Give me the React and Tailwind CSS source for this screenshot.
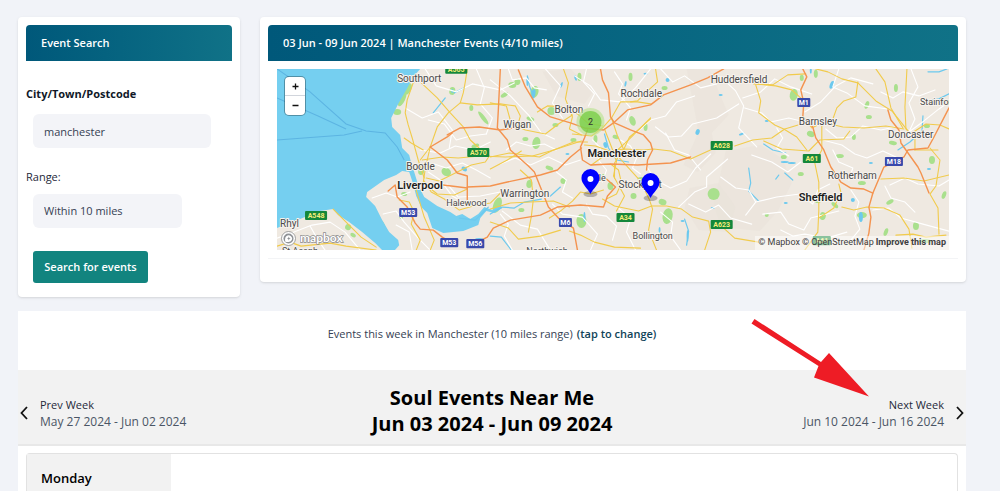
import { useState } from 'react';

const waters = [
  'M270 60 H424 L420 69 L413 77 L406 90 L398 104 L391 118 L392 127 L400 135 L402 148 L409 155 L411 163 L414 172 L418 185 L424 197 L437 206 L450 212 L456 216 L462 214 L470 219 L478 214 L484 207 L492 210 L500 205 L502 208 L494 213 L486 211 L480 218 L478 225 L463 231 L443 233 L432 228 L427 213 L421 207 L416 196 L413 184 L409 172 L402 171 L396 175 L384 180 L367 192 L366 197 L375 206 L382 220 L389 232 L398 240 L399 245 L393 252 H384 L375 243 L362 232 L349 222 L338 215 L333 209 L320 211 L300 219 L277 228 H270 Z',
];

const ferries = [
  'M277 69 L310 92 L346 124 L366 131 L385 133 L397 147 L404 160',
  'M277 98 L318 116 L346 129',
  'M277 140 L344 135 L362 131',
];

const minorRoads = [
  'M425 69 L436 86 L456 92 L472 84 L500 90 L514 83',
  'M405 108 L422 118 L438 112 L452 130 L449 148',
  'M420 150 L440 153 L455 146 L474 150 L490 142',
  'M372 198 L386 193 L397 197 L410 192',
  'M383 214 L396 211 L404 222 L418 238 L430 250',
  'M396 225 L409 232 L412 250',
  'M277 238 L294 232 L312 225 L330 222 L345 232 L360 250',
  'M310 226 L318 240 L325 250',
  'M428 172 L440 180 L452 196 L470 206',
  'M432 190 L447 184 L458 197 L480 196 L500 192',
  'M490 80 L510 96 L528 115 L541 133 L554 139',
  'M545 69 L560 86 L552 103 L562 118',
  'M574 76 L590 86 L600 100 L620 102 L635 88 L650 69',
  'M634 134 L650 120 L665 116 L676 102 L694 96',
  'M655 127 L668 137 L681 136 L692 124 L716 118 L738 104',
  'M665 133 L674 150 L688 155 L700 170',
  'M645 165 L655 180 L670 188 L686 181 L695 168 L710 154',
  'M678 207 L694 192 L706 187 L706 177 L727 159',
  'M688 204 L705 212 L718 205 L730 218 L751 224',
  'M618 208 L630 218 L626 232 L635 250',
  'M552 204 L562 214 L582 217 L597 234 L590 250',
  'M500 164 L515 158 L530 165 L548 157 L565 165 L580 160',
  'M502 211 L520 225 L537 229 L550 250',
  'M720 77 L735 91 L743 106 L738 128 L756 147',
  'M744 108 L761 113 L770 122 L788 118 L804 122',
  'M742 98 L760 92 L774 79 L790 87 L811 94',
  'M804 112 L820 102 L835 86 L850 78 L872 84',
  'M825 129 L836 138 L850 137 L862 126 L880 130 L894 127',
  'M720 177 L735 188 L748 190 L755 202 L745 215',
  'M755 202 L776 197 L799 194 L812 204 L817 190 L829 184',
  'M762 214 L780 212 L788 224 L803 230 L810 218 L838 211',
  'M800 162 L787 172 L771 162 L751 155',
  'M822 140 L841 145 L854 154 L866 158 L882 151 L895 157',
  'M850 190 L858 202 L854 216 L859 229 L850 240',
  'M872 210 L888 208 L900 218 L922 224 L948 231',
  'M889 185 L904 178 L917 184 L938 186 L948 180',
  'M910 69 L917 87 L908 103 L914 119 L908 132',
  'M908 132 L923 121 L938 109 L948 102',
  'M838 69 L832 87 L846 93 L864 106 L887 109',
  'M476 69 L484 88 L480 104 L492 118 L486 134',
  'M428 120 L444 124 L456 140 L470 136 L486 134',
  'M434 164 L446 168 L462 163 L476 170 L490 178',
  'M508 69 L512 80 L526 78 L534 88 L546 90',
  'M506 150 L516 142 L530 146 L544 144 L556 150',
  'M586 69 L583 82 L594 94 L588 106',
  'M614 72 L622 84 L618 94 L630 108 L626 120',
  'M660 69 L672 82 L684 76 L700 88 L716 84',
  'M592 140 L600 148 L598 160 L606 170 L602 182',
  'M620 140 L630 146 L636 158 L632 168 L640 174',
  'M556 172 L566 180 L562 192 L572 198',
  'M500 214 L508 224 L504 236 L512 250',
  'M586 204 L592 214 L606 216 L616 226 L612 240',
  'M660 212 L672 222 L670 236 L680 250',
  'M776 128 L782 138 L776 148 L788 156',
  'M832 150 L838 162 L852 168 L848 180',
  'M880 92 L892 98 L902 92 L918 96 L934 90',
  'M884 186 L890 198 L904 202 L914 212',
  'M780 230 L792 236 L804 234 L826 238 L846 232',
];

const yellowRoads = [
  'M423 76 L413 83 L407 100 L405 113 L408 125 L412 138 L418 160 L424 178',
  'M420 82 L437 98 L450 113 L463 127 L470 140 L482 151',
  'M467 69 L465 82 L463 93 L460 103 L448 113 L437 127 L430 147 L420 160',
  'M460 103 L477 105 L500 104 L515 106 L520 116 L517 127',
  'M422 160 L442 157 L458 158 L480 156 L505 157 L532 156 L550 151 L581 141',
  'M423 150 L411 143 L404 138',
  'M426 178 L439 181 L453 174 L471 165 L485 162 L489 156',
  'M424 181 L431 192 L444 199 L459 210 L473 206 L490 203 L500 193 L512 197',
  'M430 147 L425 169 L423 183 L437 194 L454 195 L467 189',
  'M399 200 L409 202 L414 212 L411 224 L420 240 L416 250',
  'M416 190 L424 217 L434 240 L430 250',
  'M277 246 L290 242 L301 246 L330 243 L346 246 L376 250',
  'M333 209 L346 222 L361 237 L376 247',
  'M490 209 L510 203 L530 202 L553 201 L569 207',
  'M490 157 L509 153 L539 157 L551 151 L573 142 L587 142',
  'M490 103 L506 106 L511 124 L525 130 L545 134 L558 124 L572 115',
  'M563 69 L568 83 L565 99 L572 117 L569 129 L581 135',
  'M537 112 L547 106 L563 107 L577 114 L587 123 L602 126',
  'M572 134 L591 136 L603 127 L611 118 L620 102 L637 102 L650 104',
  'M655 69 L657 82 L646 92 L637 101 L630 102',
  'M604 129 L611 147 L616 161 L613 176 L624 196 L616 211',
  'M611 118 L617 136 L623 149 L614 163 L614 178',
  'M650 119 L640 128 L629 137 L623 150',
  'M584 145 L595 146 L609 151 L624 149 L643 150 L653 149 L670 151 L690 159 L712 149 L732 145',
  'M591 165 L602 157 L616 151 L629 139 L643 125 L650 118',
  'M610 164 L618 170 L621 183 L616 194 L606 199',
  'M619 158 L630 170 L640 181 L649 200 L652 209 L648 230 L656 250',
  'M602 199 L614 206 L638 211 L651 206 L666 206 L681 209 L692 217 L708 221 L710 232 L704 250',
  'M490 169 L507 160 L521 151',
  'M549 218 L560 211 L572 201 L580 192 L590 194 L603 190',
  'M569 231 L580 235 L594 242 L614 247 L640 248',
  'M520 170 L531 180 L533 199 L531 216 L528 232',
  'M490 222 L508 228 L518 239 L540 236 L560 230',
  'M753 84 L772 85 L787 75 L805 74',
  'M755 85 L760 101 L758 113 L774 125 L783 129 L796 137 L806 150',
  'M755 84 L775 86 L791 90 L802 100',
  'M734 146 L752 140 L771 138 L784 129 L804 123 L825 123 L842 127 L863 128 L885 126 L903 129',
  'M763 141 L781 149 L808 151 L819 140 L843 139 L849 131',
  'M815 69 L827 72 L841 79 L857 83 L875 101 L891 111 L907 131',
  'M857 82 L855 97 L843 101 L836 108 L831 122',
  'M875 69 L884 82 L890 108 L902 128',
  'M906 69 L904 107 L905 129 L914 139 L914 150',
  'M914 150 L937 150',
  'M911 133 L925 124 L939 125 L948 129',
  'M803 118 L811 128 L821 123 L821 150 L814 163 L818 182 L818 211 L817 232 L804 250',
  'M838 184 L840 192 L833 208 L818 218',
  'M841 207 L853 210 L866 207 L883 208 L899 215 L908 229 L911 248',
  'M880 179 L903 178 L923 181 L948 175',
  'M929 148 L939 160 L935 186 L929 194 L937 208 L938 234',
  'M895 235 L912 234 L925 237 L945 235',
  'M723 228 L734 238 L758 242',
];

const orangeRoads = [
  'M500 69 L498 110 L497 128 L507 140 L510 150 L528 166 L534 172 L540 187 L548 207 L558 218 L573 228 L577 250',
  'M518 70 L525 87 L537 107 L550 117 L570 123 L584 128 L603 130 L613 123 L627 110 L650 105 L663 95 L690 85 L707 78 L723 69',
  'M600 69 L602 80 L608 93 L610 117 L614 123 L630 130 L643 135 L650 143 L652 150 L647 160 L646 170',
  'M587 130 L584 138 L580 147 L582 160 L590 165 L610 164 L637 165 L670 163 L690 157',
  'M467 187 L490 186 L507 182 L540 175 L557 170 L570 157 L581 148',
  'M475 243 L487 237 L493 228 L510 220 L540 215 L557 207 L580 205 L603 207 L607 196 L615 187 L606 179',
  'M447 135 L460 128 L479 127 L500 130 L520 127',
  'M430 147 L447 137 L452 133',
  'M430 147 L447 160 L457 173 L467 176 L467 202',
  'M443 185 L467 188',
  'M388 191 L395 185 L397 197 L407 207 L415 223 L420 229 L433 230 L442 237 L452 243',
  'M802 69 L806 77 L800 90 L803 103 L802 117 L812 127 L815 138 L823 150 L830 167 L840 182 L850 188 L863 189 L872 193 L868 207 L870 217 L868 233 L863 250',
  'M872 193 L883 167 L903 157 L907 150 L927 148 L933 137 L948 108',
  'M887 110 L890 120 L898 130 L900 143 L917 167 L920 173 L928 193',
];

const streams = [
  'M527 76 L529 86 L532 94',
  'M445 98 L433 113',
  'M454 93 L464 88',
  'M490 214 L502 207 L514 208 L524 202 L541 199',
  'M490 236 L501 237 L511 250',
  'M550 196 L560 187',
  'M748 168 L750 183 L748 191 L758 201',
  'M784 173 L792 180 M775 179 L778 175',
  'M763 144 L772 150 L785 153',
  'M897 150 L909 142 L921 131 L922 116',
  'M927 72 L938 72 L946 69 M927 101 L938 99 L948 94',
  'M604 134 L608 148 L616 160 L628 162',
  'M684 219 L688 231 L686 245',
  'M459 218 L475 220 L488 207',
];

// x, y, rx, ry, rotation
const parks = [
  [408, 89, 3, 6, 25], [402, 99, 3, 8, 25], [397, 112, 4, 3, 0], [452, 91, 3, 4, 10], [471, 108, 2, 3, 0],
  [483, 118, 2, 8, -38], [421, 171, 3, 4, 10], [446, 172, 5, 4, 30], [475, 146, 4, 2, -20], [404, 194, 3, 2, 0],
  [382, 224, 2, 5, -30], [348, 227, 3, 3, 20], [353, 235, 3, 2, 30], [401, 216, 2, 3, 0], [432, 211, 2, 4, 0],
  [512, 85, 4, 3, 0], [517, 82, 3, 3, 20], [504, 95, 4, 2, -30], [534, 92, 4, 6, 15], [551, 111, 4, 4, 0],
  [530, 119, 4, 2, 20], [536, 143, 4, 6, 10], [525, 139, 3, 2, 0], [579, 77, 2, 4, 0], [555, 125, 3, 2, 0],
  [573, 140, 3, 2, 0], [595, 139, 2, 4, 0], [615, 137, 3, 2, 20], [632, 121, 3, 5, -20], [645, 127, 2, 4, 0],
  [630, 77, 2, 4, 0], [664, 88, 3, 2, 0], [549, 168, 4, 2, 20], [563, 181, 3, 3, 0], [529, 184, 3, 4, 10],
  [667, 216, 5, 8, 10], [662, 202, 4, 3, 20], [581, 221, 5, 7, 0], [610, 186, 3, 4, 0], [713, 194, 6, 6, 0],
  [633, 196, 3, 3, 0], [603, 177, 2, 3, 0], [641, 179, 4, 2, 0], [521, 210, 3, 2, 0], [497, 205, 4, 8, 20],
  [793, 95, 4, 6, 10], [801, 78, 2, 3, 0], [815, 74, 2, 4, 0], [810, 134, 4, 3, 20], [783, 157, 3, 2, 0],
  [839, 156, 4, 2, 0], [853, 137, 2, 3, 0], [866, 105, 2, 4, 20], [868, 117, 3, 2, 0], [892, 143, 4, 2, 10],
  [895, 88, 2, 4, 0], [926, 126, 3, 2, 0], [931, 160, 3, 4, 0], [822, 216, 3, 4, 10], [834, 205, 4, 2, 40],
  [817, 201, 3, 2, 0], [861, 215, 5, 3, 0], [885, 232, 2, 4, 20], [915, 226, 3, 4, 0], [924, 241, 7, 2, 0],
  [800, 174, 3, 2, 0], [861, 183, 4, 2, 0], [889, 202, 4, 2, -30], [943, 195, 2, 4, 20], [766, 215, 2, 2, 0],
];

const lakes = [
  [452, 91, 1, 2, 0], [533, 94, 2, 5, 10], [527, 81, 1, 5, 0], [561, 85, 1, 3, 20], [575, 78, 1, 3, -20],
  [645, 74, 2, 1, 0], [625, 84, 1, 3, 10], [667, 80, 2, 2, 0], [697, 132, 2, 3, 20], [567, 154, 2, 1, 0],
  [605, 145, 2, 3, -20], [741, 134, 3, 1, -20], [766, 121, 2, 1, 0], [831, 85, 2, 4, 20], [810, 71, 1, 3, 0],
  [720, 95, 2, 1, 0], [784, 162, 4, 1, 0], [791, 163, 4, 1, 0], [870, 163, 2, 1, 0], [860, 217, 2, 5, 0],
  [785, 203, 2, 1, 0], [852, 200, 2, 2, 0], [584, 217, 1, 5, 0], [659, 230, 1, 3, 0], [687, 236, 1, 6, 0],
  [682, 221, 2, 1, 0], [712, 208, 2, 1, 0], [464, 169, 3, 2, 30], [479, 239, 4, 1, 0], [928, 169, 2, 1, 0],
];

const hills = [
  'M686 69 L709 70 L728 115 L711 133 L715 153 L697 172 L683 165 L698 132 Z',
  'M725 151 L760 145 L782 159 L791 183 L777 211 L759 231 L720 227 L713 204 Z',
  'M689 188 L718 183 L735 207 L728 232 L698 230 L684 208 Z',
  'M542 72 L570 69 L593 91 L584 104 L556 96 Z',
];

const towns = [
  { name: 'Southport', x: 397, y: 82 },
  { name: 'Bootle', x: 406, y: 170 },
  { name: 'Halewood', x: 446, y: 206, small: true },
  { name: 'Wigan', x: 503, y: 128 },
  { name: 'Bolton', x: 554, y: 113 },
  { name: 'Rochdale', x: 620, y: 97 },
  { name: 'Huddersfield', x: 710, y: 83 },
  { name: 'Barnsley', x: 798, y: 125 },
  { name: 'Doncaster', x: 887, y: 138 },
  { name: 'Stainforth', x: 919, y: 105, small: true },
  { name: 'Rotherham', x: 827, y: 179 },
  { name: 'Warrington', x: 500, y: 197 },
  { name: 'Sale', x: 588, y: 181, small: true },
  { name: 'Stockport', x: 618, y: 188 },
  { name: 'Bollington', x: 632, y: 239, small: true },
  { name: 'Northwich', x: 526, y: 254, small: true },
  { name: 'Rhyl', x: 280, y: 227 },
  { name: 'St Asaph', x: 282, y: 254, small: true },
];

const cities = [
  { name: 'Liverpool', x: 397, y: 189 },
  { name: 'Manchester', x: 587, y: 157 },
  { name: 'Sheffield', x: 798, y: 201 },
];

const shields = [
  { name: 'A565', x: 456, y: 70, w: 22, fill: '#14873b' },
  { name: 'A570', x: 478, y: 153, w: 22, fill: '#14873b' },
  { name: 'A548', x: 316, y: 216, w: 22, fill: '#14873b' },
  { name: 'A628', x: 721, y: 146, w: 22, fill: '#14873b' },
  { name: 'A61', x: 811, y: 159, w: 18, fill: '#14873b' },
  { name: 'A34', x: 625, y: 218, w: 18, fill: '#14873b' },
  { name: 'A623', x: 721, y: 225, w: 22, fill: '#14873b' },
  { name: 'A61', x: 821, y: 241, w: 18, fill: '#14873b' },
  { name: 'M53', x: 408, y: 213, w: 18, fill: '#3949ab' },
  { name: 'M53', x: 449, y: 243, w: 18, fill: '#3949ab' },
  { name: 'M56', x: 475, y: 244, w: 18, fill: '#3949ab' },
  { name: 'M6', x: 565, y: 223, w: 13, fill: '#3949ab' },
  { name: 'M1', x: 803, y: 103, w: 13, fill: '#3949ab' },
  { name: 'M18', x: 893, y: 162, w: 18, fill: '#3949ab' },
];

const pins = [
  { x: 590, y: 194 },
  { x: 650, y: 198 },
];

function MapCanvas() {
  return (
    <svg
      className="block h-full w-full font-['Roboto',sans-serif]"
      viewBox="277 69 671 181"
      preserveAspectRatio="xMidYMid slice"
      role="img"
      aria-label="Map of events around Manchester"
    >
      <rect x="0" y="0" width="1400" height="400" fill="#efe9e1" />
      {hills.map((d) => (
        <path key={d} d={d} fill="#e9e2da" opacity="0.6" />
      ))}
      {parks.map(([x, y, rx, ry, r]) => (
        <ellipse
          key={`${x}-${y}`}
          cx={x}
          cy={y}
          rx={rx}
          ry={ry}
          transform={`rotate(${r} ${x} ${y})`}
          fill="#a9e08d"
        />
      ))}
      {waters.map((d) => (
        <path key={d} d={d} fill="#75cff0" />
      ))}
      <g fill="none" stroke="#5cb4e2" strokeWidth="1">
        {ferries.map((d) => (
          <path key={d} d={d} />
        ))}
      </g>
      {lakes.map(([x, y, rx, ry, r]) => (
        <ellipse
          key={`${x}-${y}`}
          cx={x}
          cy={y}
          rx={rx}
          ry={ry}
          transform={`rotate(${r} ${x} ${y})`}
          fill="#6cc9ee"
        />
      ))}
      <g fill="none" strokeLinejoin="round" strokeLinecap="round">
        {streams.map((d) => (
          <path key={d} d={d} stroke="#6cc9ee" strokeWidth="1.2" />
        ))}
        {minorRoads.map((d) => (
          <path key={d} d={d} stroke="#ffffff" strokeWidth="1.1" />
        ))}
        {yellowRoads.map((d) => (
          <path key={d} d={d} stroke="#f1cb4c" strokeWidth="1.1" />
        ))}
        {orangeRoads.map((d) => (
          <path key={d} d={d} stroke="#f4934f" strokeWidth="1.4" />
        ))}
      </g>

      {shields.map((s) => (
        <g key={`${s.name}-${s.x}`}>
          <rect x={s.x - s.w / 2} y={s.y - 5} width={s.w} height="9" rx="1" fill={s.fill} />
          <text
            x={s.x}
            y={s.y + 2}
            textAnchor="middle"
            fontSize="7"
            fontWeight="700"
            fill={s.name[0] === 'A' ? '#f5ec7a' : '#ffffff'}
          >
            {s.name}
          </text>
        </g>
      ))}

      <g stroke="#f7f3ee" strokeWidth="2" strokeLinejoin="round" paintOrder="stroke">
        {towns.map((t) => (
          <text key={t.name} x={t.x} y={t.y} fontSize={t.small ? 9 : 10} fill="#4a4a4a">
            {t.name}
          </text>
        ))}
        {cities.map((c) => (
          <text key={c.name} x={c.x} y={c.y} fontSize="11" fontWeight="600" fill="#1c1c1c">
            {c.name}
          </text>
        ))}
      </g>

      {/* Cluster */}
      <circle cx="590" cy="122" r="14" fill="#b5e28c" fillOpacity="0.6" />
      <circle cx="590" cy="122" r="11" fill="#6ecc39" fillOpacity="0.7" />
      <text x="590" y="125" textAnchor="middle" fontSize="9" fill="#333333">
        2
      </text>

      {pins.map((p) => (
        <g key={p.x}>
          <ellipse cx={p.x} cy={p.y} rx="7" ry="3" fill="#000000" opacity="0.25" />
          <path
            d={`M${p.x} ${p.y} C${p.x - 3} ${p.y - 6} ${p.x - 9} ${p.y - 10} ${p.x - 9} ${p.y - 16} a9 9 0 0 1 18 0 C${p.x + 9} ${p.y - 10} ${p.x + 3} ${p.y - 6} ${p.x} ${p.y} Z`}
            fill="#0000ff"
          />
          <circle cx={p.x} cy={p.y - 15} r="3" fill="#ffffff" />
        </g>
      ))}
    </svg>
  );
}

function MapboxLogo() {
  return (
    <div className="absolute bottom-1 left-1 flex items-center gap-1">
      <svg width="15" height="15" viewBox="0 0 15 15" aria-hidden="true">
        <circle cx="7.5" cy="7.5" r="7" fill="#ffffff" stroke="#8b8b8b" strokeWidth="0.8" />
        <circle cx="7.5" cy="7.5" r="5" fill="#8f9296" />
        <path d="M4.3 10.8 C3.8 8.5 4 6.6 5.3 5.3 a3.3 3.3 0 0 1 4.7 4.7 C8.6 11.2 6.5 11.3 4.3 10.8Z" fill="#ffffff" />
        <path d="M7.8 5.6 L8.4 6.9 L9.7 7.5 L8.4 8.1 L7.8 9.4 L7.2 8.1 L5.9 7.5 L7.2 6.9Z" fill="#8f9296" />
      </svg>
      <svg className="font-['Lato',sans-serif]" width="50" height="15" viewBox="0 0 50 15">
        <text
          x="0"
          y="11"
          fontSize="12"
          fontWeight="700"
          fill="#ffffff"
          stroke="#8b8b8b"
          strokeWidth="1.4"
          paintOrder="stroke"
        >
          mapbox
        </text>
      </svg>
    </div>
  );
}

function PanelHeader({ children }) {
  return (
    <h2 className="flex h-9 items-center rounded-t-sm bg-linear-to-r from-[#00587a] to-[#107287] px-[15px] text-[11px] font-semibold text-white">
      {children}
    </h2>
  );
}

function SearchPanel() {
  const [city, setCity] = useState('manchester');
  const [range, setRange] = useState('10');

  return (
    <form
      onSubmit={(e) => e.preventDefault()}
      className="w-[222px] shrink-0 rounded-sm bg-white px-2 pt-2 pb-3.5 shadow-sm"
    >
      <PanelHeader>Event Search</PanelHeader>
      <label htmlFor="city" className="mt-6 block text-[11px] leading-[18px] font-bold text-gray-900">
        City/Town/Postcode
      </label>
      <input
        id="city"
        type="text"
        value={city}
        onChange={(e) => setCity(e.target.value)}
        className="mt-[11px] ml-[7px] block h-[34px] w-[178px] rounded-md bg-[#f3f4f8] px-[11px] text-[11px] text-gray-700 outline-none"
      />
      <label htmlFor="range" className="mt-5 block text-[11px] leading-[18px] font-medium text-gray-800">
        Range:
      </label>
      <select
        id="range"
        value={range}
        onChange={(e) => setRange(e.target.value)}
        className="mt-2 ml-[7px] block h-[34px] w-[149px] appearance-none rounded-md bg-[#f3f4f8] px-[11px] text-[11px] text-gray-700 outline-none"
      >
        <option value="10">Within 10 miles</option>
        <option value="25">Within 25 miles</option>
        <option value="50">Within 50 miles</option>
      </select>
      <button
        type="submit"
        className="mt-[23px] ml-[7px] block h-8 w-[115px] rounded-[3px] bg-[#12847f] text-[11px] font-semibold text-white"
      >
        Search for events
      </button>
    </form>
  );
}

function MapPanel() {
  return (
    <section className="min-w-0 flex-1 rounded-sm bg-white px-2 pt-2 pb-[23px] shadow-sm">
      <div className="border-b border-gray-100 pb-2">
        <PanelHeader>03 Jun - 09 Jun 2024 | Manchester Events (4/10 miles)</PanelHeader>
        <div className="relative mx-[9px] mt-2 h-[181px] overflow-hidden">
          <MapCanvas />
          <div className="absolute top-2 left-2 flex w-5 flex-col overflow-hidden rounded-sm bg-white ring-1 ring-black/30">
            <button type="button" aria-label="Zoom in" className="flex h-[19px] items-center justify-center border-b border-gray-300">
              <svg width="7" height="7" viewBox="0 0 7 7" stroke="#111111" strokeWidth="1.3">
                <path d="M0.5 3.5H6.5M3.5 0.5V6.5" />
              </svg>
            </button>
            <button type="button" aria-label="Zoom out" className="flex h-[19px] items-center justify-center">
              <svg width="7" height="7" viewBox="0 0 7 7" stroke="#111111" strokeWidth="1.3">
                <path d="M0.5 3.5H6.5" />
              </svg>
            </button>
          </div>
          <MapboxLogo />
          <div className="absolute right-0 bottom-0 flex h-3.5 items-center gap-0.5 bg-white/50 px-[3px] font-['Roboto',sans-serif] text-[9px] text-[#404040]">
            <a href="#mapbox">© Mapbox</a>
            <a href="#osm">© OpenStreetMap</a>
            <a href="#improve" className="font-bold">Improve this map</a>
          </div>
        </div>
      </div>
    </section>
  );
}

function Chevron({ d }) {
  return (
    <svg className="shrink-0" width="8" height="14" viewBox="0 0 8 14" fill="none" stroke="#111111" strokeWidth="1.8">
      <path d={d} />
    </svg>
  );
}

function WeekNav() {
  return (
    <div className="flex h-[76px] items-center justify-between border-b-2 border-[#e8e8e8] bg-[#f2f2f2] px-0.5">
      <a href="#prev" className="mt-3 flex flex-1 items-center gap-3">
        <Chevron d="M7 1L1.5 7L7 13" />
        <span className="leading-[17px]">
          <span className="block text-[11px] font-medium text-gray-800">Prev Week</span>
          <span className="block text-[12px] font-medium text-gray-600">May 27 2024 - Jun 02 2024</span>
        </span>
      </a>
      <h1 className="mt-2 text-center text-[20px] leading-[26px] font-bold text-black">
        Soul Events Near Me
        <br />
        Jun 03 2024 - Jun 09 2024
      </h1>
      <a href="#next" className="mt-3 flex flex-1 items-center justify-end gap-3">
        <span className="text-right leading-[17px]">
          <span className="block text-[11px] font-medium text-gray-800">Next Week</span>
          <span className="block text-[12px] font-medium text-gray-600">Jun 10 2024 - Jun 16 2024</span>
        </span>
        <Chevron d="M1 1L6.5 7L1 13" />
      </a>
    </div>
  );
}

export default function App() {
  return (
    <div className="flex min-h-screen flex-col bg-[#f1f3f8] pt-[17px] pr-[34px] pl-[18px] font-['Open_Sans','Noto_Sans',sans-serif]">
      <div className="flex items-start gap-5">
        <SearchPanel />
        <MapPanel />
      </div>

      <section className="relative mt-3.5 flex flex-1 flex-col bg-white">
        <p className="flex h-[59px] items-center justify-center gap-1 pb-3 text-[11px] text-gray-700">
          Events this week in Manchester (10 miles range)
          <a href="#city" className="font-semibold text-[#0f4358]">(tap to change)</a>
        </p>
        <WeekNav />
        <div className="mx-2 mt-[7px] flex flex-1 rounded-t-sm border border-b-0 border-[#e2e2e2]">
          <div className="w-36 bg-[#f2f2f2] px-3.5 pt-3.5">
            <h3 className="text-[13px] leading-5 font-semibold text-black">Monday</h3>
          </div>
        </div>

        {/* Pointer to the next week link */}
        <svg
          className="pointer-events-none absolute top-2 right-[97px]"
          width="118"
          height="78"
          viewBox="0 0 118 78"
          fill="#ee1c25"
          aria-hidden="true"
        >
          <path d="M3.5 0L70 43L78 34L118 77.5L63 58.5L67.5 47L0.5 4.5Z" />
        </svg>
      </section>
    </div>
  );
}
